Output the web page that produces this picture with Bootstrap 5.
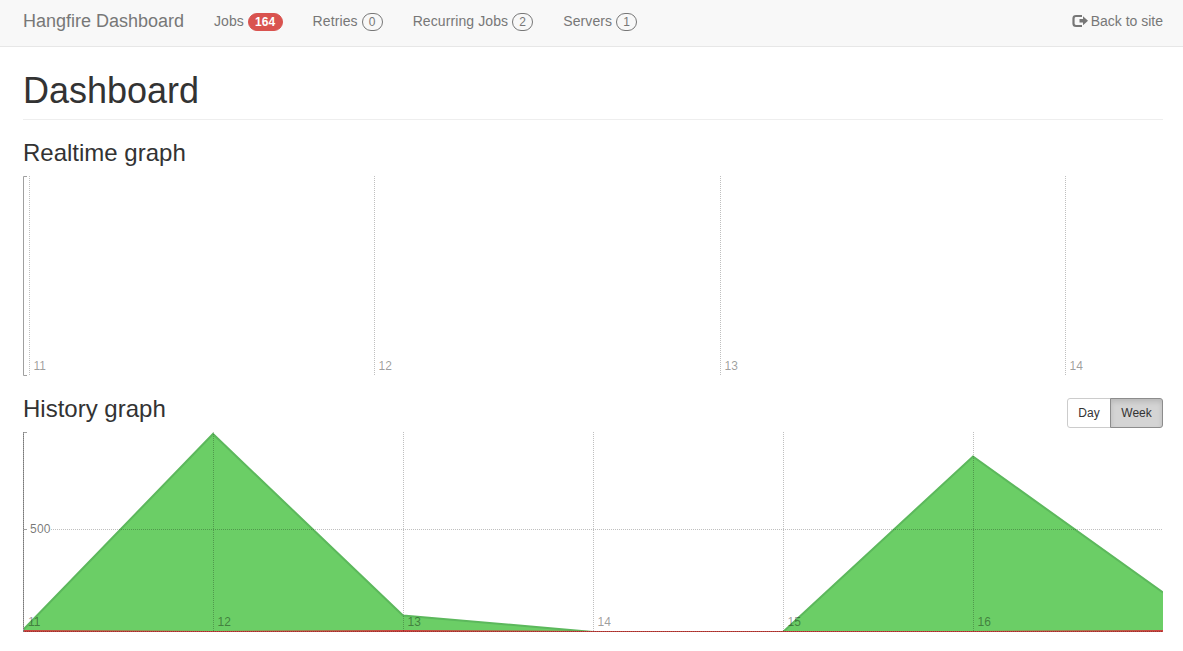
<!DOCTYPE html>
<html lang="en">
<head>
<meta charset="utf-8">
<meta name="viewport" content="width=device-width, initial-scale=1">
<title>Hangfire Dashboard</title>
<link href="https://cdn.jsdelivr.net/npm/bootstrap@5.3.0/dist/css/bootstrap.min.css" rel="stylesheet">
<style>
body{font-family:"Liberation Sans",Arial,sans-serif;font-size:14px;line-height:20px;color:#333;overflow:hidden}
.topbar{height:47px;background:#f8f8f8;border-bottom:1px solid #e7e7e7;padding:0 20px 0 23px}
.topbar .navbar-brand{font-size:18px;line-height:20px;color:#777;padding:0 0 5px;margin:0 30px 0 0}
.topbar .navbar-nav .nav-link{color:#777;padding:0 0 4px;line-height:20px;height:24px}
.topbar .navbar-nav{gap:30px}
.wide-text{letter-spacing:.1px}
.metric{display:inline-block;font-size:12px;line-height:12px;padding:2px 6px;border:1px solid #777;border-radius:10px;height:18px;min-width:21px;text-align:center;letter-spacing:0;position:relative;top:-1px;vertical-align:-1px;margin:-2px 0}
.metric-danger{background:#d9534f;border-color:#d9534f;color:#fff;font-weight:700;padding:2px 6.500px}
.content{padding:0 20px 0 23px}
h1{font-size:36px;line-height:40px;font-weight:400;margin:24px 0 0;padding-bottom:9px;border-bottom:1px solid #eee;height:49px}
h3{font-size:24px;line-height:26px;font-weight:400;margin:0}
.realtime-title{margin:20px 0 10px}
.history-head{height:56px;padding-top:20px}
.range{margin-top:2px}
.range .btn{font-size:12px;line-height:18px;padding:5px 10px;border-radius:3px;border:1px solid #ccc;color:#333;background:#fff;height:30px}
.range .btn:first-child{width:44px}
.range .btn.active{width:53px;background:#d4d4d4;border-color:#8c8c8c;box-shadow:inset 0 3px 5px rgba(0,0,0,.125)}
.chart{display:block;width:1140px;height:200px;font-size:12px}
.grid-line{stroke:rgba(0,0,0,.25);stroke-dasharray:1 1;fill:none}
.axis{stroke:#a0a0a0;fill:none}
.tick{fill:#000;fill-opacity:.4}
</style>
</head>
<body>
<nav class="topbar navbar navbar-expand">
  <a class="navbar-brand" href="#">Hangfire Dashboard</a>
  <div class="navbar-nav">
    <a class="nav-link" href="#">Jobs <span class="metric metric-danger">164</span></a>
    <a class="nav-link wide-text" href="#">Retries <span class="metric">0</span></a>
    <a class="nav-link wide-text" href="#">Recurring Jobs <span class="metric">2</span></a>
    <a class="nav-link wide-text" href="#">Servers <span class="metric">1</span></a>
  </div>
  <div class="navbar-nav ms-auto">
    <a class="nav-link d-flex" href="#"><svg class="flex-shrink-0" width="19" height="20" viewBox="0 0 19 20"><path d="M10 5H4Q1.500 5 1.500 7.500V12.500Q1.500 15 4 15H10" fill="none" stroke="#777" stroke-width="2.200"/><path d="M7.500 8h3.500V5.300l5 4.500-5 4.500v-2.700H7.500z" fill="#777"/></svg>Back to site</a>
  </div>
</nav>
<main class="content">
  <h1>Dashboard</h1>
  <h3 class="realtime-title">Realtime graph</h3>
  <svg class="chart" viewBox="0 0 1140 200">
    <path class="axis" d="M4 .5H.5V199.5H4"/>
    <path class="grid-line" d="M6.500 0V200M351.500 0V200M697.500 0V200M1042.500 0V200"/>
    <g class="tick"><text x="10.500" y="194">11</text><text x="355.500" y="194">12</text><text x="701.500" y="194">13</text><text x="1046.500" y="194">14</text></g>
  </svg>
  <div class="history-head d-flex justify-content-between">
    <h3>History graph</h3>
    <div class="range btn-group align-self-start"><button class="btn">Day</button><button class="btn active">Week</button></div>
  </div>
  <svg class="chart" viewBox="0 0 1140 200">
    <path d="M0 198L190 2L380 183.500L570 200H760L950 24.500L1140 160.500V200H0Z" fill="#6bce66"/>
    <path d="M0 198L190 2L380 183.500L570 200H760L950 24.500L1140 160.500" fill="none" stroke="#5cb85c" stroke-width="2"/>
    <path d="M0 199L190 200L380 199L570 200H950L1140 199" fill="none" stroke="#cb4540" stroke-width="2"/>
    <path class="axis" d="M4 .5H.5V200M0 97.500H4"/>
    <path class="grid-line" d="M.5 0V200M190.500 0V200M380.500 0V200M570.500 0V200M760.500 0V200M950.500 0V200M28 97.500H1140M0 199.500H1140"/>
    <g class="tick"><text x="5" y="194">11</text><text x="194.500" y="194">12</text><text x="384.500" y="194">13</text><text x="574.500" y="194">14</text><text x="764.500" y="194">15</text><text x="954.500" y="194">16</text><text x="7" y="101" fill-opacity=".55" textLength="20.500">500</text></g>
  </svg>
</main>
<script src="https://cdn.jsdelivr.net/npm/bootstrap@5.3.0/dist/js/bootstrap.bundle.min.js"></script>
</body>
</html>
